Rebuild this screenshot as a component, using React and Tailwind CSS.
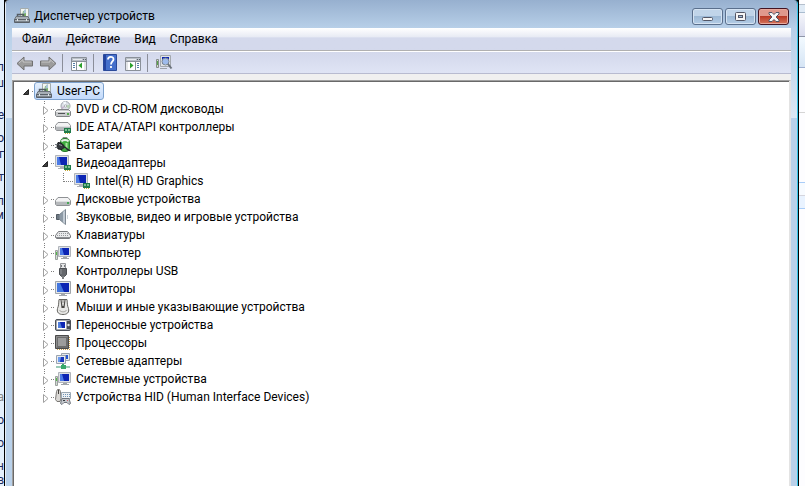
import { useState } from 'react';

function DeviceManagerIcon() {
  return (
    <svg width="16" height="16" viewBox="0 0 16 16" aria-hidden="true">
      <path d="M6.500.500h8v9h-8z" fill="#f4f6f2" stroke="#a5adad" />
      <path d="M9 3h3v5H8z" fill="#79b465" />
      <path d="M10 2l2-1v4l-3 1z" fill="#a9c4d6" />
      <path d="M3.500 9V6.500h6V9" fill="none" stroke="#555d64" strokeWidth="1.500" />
      <path d="M2 8.500h12l1.500 3h-15z" fill="#a7afb6" stroke="#6b737a" />
      <path d="M.5 11.500h15v3H.5z" fill="#7f888f" stroke="#5a6168" />
      <path d="M1 12.500h14" stroke="#aab2b8" />
      <path d="M3 11h1v2H3zM12 11h1v2h-1z" fill="#e3e8eb" />
    </svg>
  );
}

function Chip({ x = 9, y = 10 }) {
  return (
    <g>
      <path d={`M${x} ${y}h7v5h-7z`} fill="#1f7a4a" />
      <path d={`M${x + 1} ${y + 1}h2v2h-2zM${x + 4} ${y + 1}h2v2h-2z`} fill="#7dbd90" />
      <path d={`M${x + 1} ${y + 5}h1v1h-1zM${x + 3} ${y + 5}h1v1h-1zM${x + 5} ${y + 5}h1v1h-1z`} fill="#c8a93a" />
    </g>
  );
}

function DvdIcon() {
  return (
    <svg width="16" height="16" viewBox="0 0 16 16" aria-hidden="true">
      <circle cx="10.500" cy="5" r="4.500" fill="#dde1e8" stroke="#9ca1a9" />
      <path d="M10.500 5L8 1.500a4 4 0 0 1 3-1z" fill="#f6fbff" />
      <path d="M10.500 5l4-1.500a4 4 0 0 1-1 4z" fill="#b4d2b0" />
      <path d="M10.500 5L6.500 6l1 2z" fill="#c8b2cf" />
      <circle cx="10.500" cy="5" r="1.200" fill="#fff" stroke="#878c94" strokeWidth=".6" />
      <path d="M2.500 8.500h11l2 2v4l-1 1h-13l-1-1v-4z" fill="#c9cbcd" stroke="#808386" />
      <path d="M1 10.500h14" stroke="#f6f6f7" />
      <path d="M3 12.500h7" stroke="#505356" />
      <path d="M12 12h2v2h-2z" fill="#55a94d" />
    </svg>
  );
}

function IdeIcon() {
  return (
    <svg width="16" height="16" viewBox="0 0 16 16" aria-hidden="true">
      <path d="M3 3.500h10l2.500 3v4l-1 1h-13l-1-1v-4z" fill="#f3f3f4" stroke="#8e9194" />
      <path d="M1 7h14v4H1z" fill="#b6b9bc" />
      <path d="M1 7.500h14" stroke="#dfe1e2" />
      <Chip x={9} y={9} />
    </svg>
  );
}

function BatteryIcon() {
  return (
    <svg width="16" height="16" viewBox="0 0 16 16" aria-hidden="true">
      <path d="M8 .500h4v2H8z" fill="#d8dcd8" stroke="#848a84" />
      <rect x="5.500" y="1.500" width="9" height="13" rx="3.500" fill="#41ad41" stroke="#2a7a2f" />
      <path d="M6.500 4.500c1-2 6-2 7 0" fill="none" stroke="#e6efe6" strokeWidth="2" />
      <path d="M11.500 6v6" stroke="#a5e49b" strokeWidth="2" />
      <path d="M3 5.500l3 .5 3 2.500v2l-2 2-4-.5-1-3z" fill="#33373c" stroke="#191b1e" />
      <path d="M4 7.500l3 1" stroke="#949aa1" />
      <path d="M0 7.500h2.500M0 10.500h2.500" stroke="#777e86" />
      <path d="M9 10c3 0 2 3.500 6.500 3.500" fill="none" stroke="#23272c" strokeWidth="1.500" />
    </svg>
  );
}

function Screen({ x = 0, y = 0, w = 16, h = 11 }) {
  return (
    <g>
      <path d={`M${x + 0.5} ${y + 0.5}h${w - 1}v${h - 1}h-${w - 1}z`} fill="#dfe2e5" stroke="#b0b4ba" />
      <path d={`M${x + 2} ${y + 2}h${w - 4}v${h - 4}h-${w - 4}z`} fill="#0c25b4" />
      <path d={`M${x + 2} ${y + 2}h2l2 ${h - 4}h-4z`} fill="#4c7be6" />
    </g>
  );
}

function DisplayIcon() {
  return (
    <svg width="16" height="16" viewBox="0 0 16 16" aria-hidden="true">
      <Screen x={0} y={0} w={14} h={12} />
      <path d="M5 12h4v1H5zM3 13h6v1H3z" fill="#aeb3b8" />
      <Chip x={9} y={10} />
    </svg>
  );
}

function DiskIcon() {
  return (
    <svg width="16" height="16" viewBox="0 0 16 16" aria-hidden="true">
      <path d="M3 6.500h10l2.500 3v4l-1 1h-13l-1-1v-4z" fill="#f3f3f4" stroke="#8e9194" />
      <path d="M1 10h14v4H1z" fill="#b6b9bc" />
      <path d="M1 10.500h14" stroke="#dfe1e2" />
      <path d="M12 11h2v2h-2z" fill="#4aa758" />
    </svg>
  );
}

function SpeakerIcon() {
  return (
    <svg width="16" height="16" viewBox="0 0 16 16" aria-hidden="true">
      <path d="M1.500 5.500h3v5h-3z" fill="#6d7882" stroke="#525b64" />
      <path d="M4.500 5.500L10.500.500v15l-6-5z" fill="#8d9aa6" stroke="#7d8791" />
      <path d="M8 3v10l2 2V1z" fill="#c2cbd4" />
      <path d="M12.500 6v4" stroke="#ccd3d9" />
    </svg>
  );
}

function KeyboardIcon() {
  return (
    <svg width="16" height="16" viewBox="0 0 16 16" aria-hidden="true">
      <path d="M3.500 4.500h9l3 4v2l-1 1h-13l-1-1v-2z" fill="#e9eaeb" stroke="#77797c" />
      <path d="M4 6.500h9M2 8.500h12" stroke="#96999c" strokeDasharray="1 1" />
      <path d="M1 10h14v1H1z" fill="#8b8e91" />
    </svg>
  );
}

function ComputerIcon() {
  return (
    <svg width="16" height="16" viewBox="0 0 16 16" aria-hidden="true">
      <Screen x={3} y={1} w={13} h={11} />
      <path d="M8 12h4v1H8zM6 13h8v1H6z" fill="#a0a5aa" />
      <path d="M.5 5.500h2v9h-2z" fill="#d1d8d3" stroke="#9ba19e" />
      <path d="M1 7h1v3H1z" fill="#54bd48" />
    </svg>
  );
}

function UsbIcon() {
  return (
    <svg width="16" height="16" viewBox="0 0 16 16" aria-hidden="true">
      <path d="M5.500.500h5v5h-5z" fill="#e5e6e7" stroke="#97999c" />
      <path d="M6 2h1v2H6zM9 2h1v2H9z" fill="#76797d" />
      <path d="M4.500 5.500h7v6l-2 2h-3l-2-2z" fill="#65686c" stroke="#4b4e52" />
      <path d="M6 6v5" stroke="#93969a" />
      <path d="M7 13h2v3H7z" fill="#7a7d80" />
    </svg>
  );
}

function MonitorIcon() {
  return (
    <svg width="16" height="16" viewBox="0 0 16 16" aria-hidden="true">
      <path d="M.5.500h15v12H.5z" fill="#e4e7ea" stroke="#a0a5ab" />
      <path d="M2 2h12v9H2z" fill="#0c25b4" />
      <path d="M2 2h3l4 9H2z" fill="#4376de" />
      <path d="M6 13h4v1H6zM4 14h8v1H4z" fill="#a3a8ae" />
    </svg>
  );
}

function MouseIcon() {
  return (
    <svg width="16" height="16" viewBox="0 0 16 16" aria-hidden="true">
      <path d="M4 .500c-.5 4 0 5.500-1.500 9-1 4 1.500 6 5.500 6s6.500-2 5.500-6C12 6 12.500 4.500 12 .500z" fill="#e8e8e6" stroke="#64635f" />
      <path d="M5.500 1h1l1 6h1l1-6h1l-1 8h-3z" fill="#4a4845" />
      <path d="M7.500 1h1v3h-1z" fill="#8a8884" />
      <path d="M4.500 11c1 2.500 6 2.500 7 0" fill="none" stroke="#a9a8a4" />
    </svg>
  );
}

function PortableIcon() {
  return (
    <svg width="16" height="16" viewBox="0 0 16 16" aria-hidden="true">
      <rect x=".5" y="2.500" width="15" height="11" rx="1.500" fill="#a5a9b0" stroke="#4b5058" />
      <path d="M2 4h9v8H2z" fill="#fff" />
      <path d="M3 5h7v6H3z" fill="#0c25b4" />
      <path d="M3 5h2l2 6H3z" fill="#4f7ddd" />
      <path d="M12 4h3v8h-3z" fill="#4a4f57" />
      <circle cx="13.500" cy="8" r="1.200" fill="#e1e5e9" />
    </svg>
  );
}

function CpuIcon() {
  return (
    <svg width="16" height="16" viewBox="0 0 16 16" aria-hidden="true">
      <path d="M2 14.500h13M14.500 2v13" stroke="#c69d50" strokeDasharray="1 1" strokeWidth="1" />
      <path d="M.5.500h13v13H.5z" fill="#6c6c6c" stroke="#4a4a4a" />
      <path d="M3 3h8v8H3z" fill="#9c9c9c" />
      <path d="M1.500 12.500v-11h11" fill="none" stroke="#8e8e8e" />
    </svg>
  );
}

function NetworkIcon() {
  return (
    <svg width="16" height="16" viewBox="0 0 16 16" aria-hidden="true">
      <path d="M6.500.500h8v7h-8z" fill="#e4e8ec" stroke="#9aa3ae" />
      <path d="M8 2h5v4H8z" fill="#2455cf" />
      <path d="M1.500 2.500h9v8h-9z" fill="#e9ecef" stroke="#9aa3ae" />
      <path d="M3 4h6v5H3z" fill="#1736bd" />
      <path d="M3 4h3l-1 5H3z" fill="#6c9bee" />
      <path d="M7 11h2v2H7z" fill="#34a86c" />
      <path d="M1 14h14" stroke="#9ccbb8" strokeWidth="2" />
      <path d="M6 12h5v4H6z" fill="#38a96a" />
    </svg>
  );
}

function HidIcon() {
  return (
    <svg width="16" height="16" viewBox="0 0 16 16" aria-hidden="true">
      <path d="M1.500 2.500l1-2h2l1 2 .5 7-1 3h-3l-1.500-2z" fill="#d9d7d4" stroke="#7b7976" />
      <path d="M3 1h1v4H3z" fill="#45433f" />
      <path d="M6.500 3.500h9v6h-9z" fill="#eef1f4" stroke="#9aa8b4" />
      <path d="M8 5.500h7M8 7.500h7" stroke="#6f94b5" strokeDasharray="1 1" />
      <path d="M7 9.500h7l1.500 5-1.500 1-2-2H9l-2 2-1.500-1z" fill="#c3c7cc" stroke="#70767e" />
      <path d="M8 11h2v1H8z" fill="#30363d" />
      <path d="M12 11h1v1h-1z" fill="#c66" />
    </svg>
  );
}

function ArrowLeft() {
  return (
    <svg width="18" height="16" viewBox="0 0 18 16" aria-hidden="true">
      <path d="M1 8.500l7-6.500v4h8.500v5H8v4z" fill="#9c9c9c" stroke="#707070" strokeLinejoin="round" />
      <path d="M3 8l4-3.500V7h8.500" fill="none" stroke="#c5c5c5" />
    </svg>
  );
}

function ArrowRight() {
  return (
    <svg width="18" height="16" viewBox="0 0 18 16" aria-hidden="true">
      <path d="M17 8.500L10 2v4H1.500v5H10v4z" fill="#9c9c9c" stroke="#707070" strokeLinejoin="round" />
      <path d="M2.500 7H11V4.500L15 8" fill="none" stroke="#c5c5c5" />
    </svg>
  );
}

function ConsoleTreeIcon() {
  return (
    <svg width="16" height="14" viewBox="0 0 16 14" aria-hidden="true">
      <path d="M.5.500h15v13H.5z" fill="#fff" stroke="#8a9099" />
      <path d="M1 1h14v3H1z" fill="#b9bfc8" />
      <path d="M2 2.500h9" stroke="#e7eaee" />
      <path d="M12 2.500h3" stroke="#59616c" strokeDasharray="1 1" />
      <path d="M5.500 4v9M1 4.500h14" stroke="#8a9099" />
      <path d="M2 6.500h2M2 8.500h2M2 10.500h2" stroke="#547ea9" />
      <path d="M11 5.500v6L7.500 8.500z" fill="#2ca02c" />
      <path d="M13 5v8h2V5z" fill="#e3e5e8" />
    </svg>
  );
}

function ActionPaneIcon() {
  return (
    <svg width="16" height="14" viewBox="0 0 16 14" aria-hidden="true">
      <path d="M.5.500h15v13H.5z" fill="#fff" stroke="#8a9099" />
      <path d="M1 1h14v3H1z" fill="#b9bfc8" />
      <path d="M2 2.500h9" stroke="#e7eaee" />
      <path d="M12 2.500h3" stroke="#59616c" strokeDasharray="1 1" />
      <path d="M10.500 4v9M1 4.500h14" stroke="#8a9099" />
      <path d="M12 6.500h2M12 8.500h2M12 10.500h2" stroke="#547ea9" />
      <path d="M5 5.500v6l3.500-3z" fill="#2ca02c" />
      <path d="M1 5v8h2V5z" fill="#e3e5e8" />
    </svg>
  );
}

function HelpIcon() {
  return (
    <svg width="14" height="17" viewBox="0 0 14 17" aria-hidden="true">
      <path d="M.5.500h13v16H.5z" fill="#4570cb" stroke="#2b4a9a" />
      <path d="M1 1h2v15H1z" fill="#2444a0" />
      <path d="M5 5.500c0-3.500 5.500-3.500 5.500-.3C10.500 7.500 8 7.500 8 10.500M8 12v2" fill="none" stroke="#fff" strokeWidth="1.800" />
    </svg>
  );
}

function ScanIcon() {
  return (
    <svg width="17" height="16" viewBox="0 0 17 16" aria-hidden="true">
      <path d="M4.500.500h10v11h-10z" fill="#dfe2e5" stroke="#a3a8ae" />
      <path d="M6 2h7v7H6z" fill="#0c25b4" />
      <path d="M.5 4.500h2v8h-2z" fill="#d1d8d3" stroke="#858b88" />
      <path d="M1 6h1v4H1z" fill="#54a348" />
      <circle cx="9.500" cy="6.500" r="3.500" fill="#b9d6f4" fillOpacity=".85" stroke="#7d8791" />
      <path d="M12 9l3.500 4.500" stroke="#6b737b" strokeWidth="2" />
      <path d="M4 13h7v1H4z" fill="#9da3a9" />
    </svg>
  );
}

const categories = [
  { label: 'DVD и CD-ROM дисководы', icon: DvdIcon },
  { label: 'IDE ATA/ATAPI контроллеры', icon: IdeIcon },
  { label: 'Батареи', icon: BatteryIcon },
  { label: 'Видеоадаптеры', icon: DisplayIcon, devices: ['Intel(R) HD Graphics'] },
  { label: 'Дисковые устройства', icon: DiskIcon },
  { label: 'Звуковые, видео и игровые устройства', icon: SpeakerIcon },
  { label: 'Клавиатуры', icon: KeyboardIcon },
  { label: 'Компьютер', icon: ComputerIcon },
  { label: 'Контроллеры USB', icon: UsbIcon },
  { label: 'Мониторы', icon: MonitorIcon },
  { label: 'Мыши и иные указывающие устройства', icon: MouseIcon },
  { label: 'Переносные устройства', icon: PortableIcon },
  { label: 'Процессоры', icon: CpuIcon },
  { label: 'Сетевые адаптеры', icon: NetworkIcon },
  { label: 'Системные устройства', icon: ComputerIcon },
  { label: 'Устройства HID (Human Interface Devices)', icon: HidIcon },
];

const menus = ['Файл', 'Действие', 'Вид', 'Справка'];

// Letters of the page that shows behind the left edge of the window
const behind = [
  { text: 'л', cls: 'pt-[60px]' },
  { text: 'ш', cls: 'pt-[2px]' },
  { text: 'е', cls: 'pt-[18px]' },
  { text: 'о', cls: 'pt-[9px]' },
  { text: 'г', cls: 'pt-[2px]' },
  { text: 'т', cls: 'pt-[9px]' },
  { text: 'л', cls: 'pt-[10px]' },
  { text: 'м', cls: '' },
  { text: 'а', cls: 'pt-[168px] text-[#888888]' },
  { text: 'о', cls: 'pt-[9px]' },
  { text: 'о', cls: 'pt-[9px]' },
  { text: 'н', cls: 'pt-[9px]' },
  { text: 'в', cls: '' },
];

function Twisty({ open }) {
  return open
    ? <path d="M10.500 7.500v5h-5z" fill="#404040" stroke="#262626" strokeLinejoin="round" />
    : <path d="M6.500 6.500v8l4.500-4z" fill="#fff" stroke="#a0a0a0" />;
}

function Expander({ open, onToggle, label, root, last }) {
  return (
    <button type="button" onClick={onToggle} aria-expanded={open} aria-label={label} className="w-4 h-[18px] shrink-0">
      <svg width="16" height="18" viewBox="0 0 16 18" className="overflow-visible" aria-hidden="true">
        {!root && <path d={last ? 'M7.500 1v3' : 'M7.500 1v3M7.500 17v1'} stroke="#808080" strokeDasharray="1 1" />}
        <path d="M14 9.500h3" stroke="#808080" strokeDasharray="1 1" />
        <Twisty open={open} />
      </svg>
    </button>
  );
}

function NodeLabel({ icon: Icon, text, selected, onSelect }) {
  return (
    <button
      type="button"
      onClick={onSelect}
      className={`flex items-center gap-[5px] h-[18px] pl-px pr-[3px] border rounded-[3px] whitespace-nowrap ${selected ? 'border-[#7da2ce] bg-linear-to-b from-[#e4effc] to-[#c3dafb]' : 'border-transparent'}`}
    >
      <Icon />
      <span className="leading-4">{text}</span>
    </button>
  );
}

function Category({ item, last, selected, onSelect }) {
  const [open, setOpen] = useState(Boolean(item.devices));

  return (
    <li>
      <div className="flex pl-[23px]">
        <Expander open={open && Boolean(item.devices)} onToggle={() => setOpen(!open)} label={`Развернуть: ${item.label}`} last={last} />
        <NodeLabel icon={item.icon} text={item.label} selected={selected === item.label} onSelect={() => onSelect(item.label)} />
      </div>
      {open && item.devices && (
        <ul>
          {item.devices.map(name => (
            <li key={name} className="flex pl-[42px]">
              <svg width="16" height="18" viewBox="0 0 16 18" className="overflow-visible shrink-0" aria-hidden="true">
                <path d="M-11.500 1v17M7.500 1v9M8 9.500h10" fill="none" stroke="#808080" strokeDasharray="1 1" />
              </svg>
              <NodeLabel icon={item.icon} text={name} selected={selected === name} onSelect={() => onSelect(name)} />
            </li>
          ))}
        </ul>
      )}
    </li>
  );
}

function DeviceTree() {
  const [open, setOpen] = useState(true);
  const [selected, setSelected] = useState('User-PC');

  return (
    <div className="flex-1 min-h-0 overflow-hidden bg-white border-t border-l border-[#a0a0a0] border-r-2 border-r-[#e3e3e3]">
      <div className="h-full border-t border-l border-[#696969]">
        <div className="flex pl-1">
          <Expander root open={open} onToggle={() => setOpen(!open)} label="Развернуть: User-PC" />
          <NodeLabel icon={DeviceManagerIcon} text="User-PC" selected={selected === 'User-PC'} onSelect={() => setSelected('User-PC')} />
        </div>
        {open && (
          <ul>
            {categories.map((item, i) => (
              <Category key={item.label} item={item} last={i === categories.length - 1} selected={selected} onSelect={setSelected} />
            ))}
          </ul>
        )}
      </div>
    </div>
  );
}

function TitleBar() {
  const box = 'w-[31px] h-[17px] rounded-[3px] border border-[#5a6f8c] flex items-center justify-center';
  const glass = 'bg-linear-to-b from-[#c0d4e9] from-50% via-[#9cb8d5] via-50% to-[#b4cde6] inset-shadow-[0_0_0_1px_#d5e3f2]';

  return (
    <header className="flex items-start h-7 shrink-0 pl-2 pr-[8px] bg-linear-to-b from-[#97b0cf] to-[#b7cfe8]">
      <div className="flex items-center gap-1 pt-2">
        <DeviceManagerIcon />
        <h1 className="leading-4">Диспетчер устройств</h1>
      </div>
      <div className="flex gap-[2px] ml-auto pt-2">
        <button type="button" aria-label="Свернуть" className={`${box} ${glass}`}>
          <svg width="12" height="11" viewBox="0 0 12 11" aria-hidden="true">
            <rect x=".5" y="6.500" width="10" height="3" rx="1" fill="#f5f5f5" stroke="#535666" />
          </svg>
        </button>
        <button type="button" aria-label="Развернуть" className={`${box} ${glass}`}>
          <svg width="12" height="10" viewBox="0 0 12 10" aria-hidden="true">
            <rect x=".5" y=".5" width="10" height="8" rx="1" fill="#f5f5f5" stroke="#535666" />
            <rect x="3.500" y="3.500" width="4" height="2" fill="#9fbbd8" stroke="#535666" />
          </svg>
        </button>
        <button
          type="button"
          aria-label="Закрыть"
          className="w-[31px] h-[17px] rounded-[3px] border border-[#431422] flex items-center justify-center bg-linear-to-b from-[#e0988c] from-50% via-[#b93a26] via-50% to-[#d4735b] inset-shadow-[0_0_0_1px_#e8a99d]"
        >
          <svg width="12" height="10" viewBox="0 0 12 10" aria-hidden="true">
            <path d="M1 .5h3l2 2 2-2h3v1.500L8 5l3 3v1.500H8l-2-2-2 2H1V8l3-3-3-3z" fill="#f7f7f7" stroke="#535666" />
          </svg>
        </button>
      </div>
    </header>
  );
}

function Separator() {
  return <span className="w-px h-[18px] bg-[#8b8e99]" />;
}

function Toolbar() {
  return (
    <div role="toolbar" className="flex items-center h-[22px] pl-1 border-b border-[#b8bbd0] bg-linear-to-b from-[#d3d8eb] to-[#dfe4f5]">
      <button type="button" aria-label="Назад"><ArrowLeft /></button>
      <button type="button" aria-label="Вперёд" className="ml-[5px] mr-[5px]"><ArrowRight /></button>
      <Separator />
      <button type="button" aria-label="Дерево консоли" className="ml-2 mr-[6px] pt-[3px]"><ConsoleTreeIcon /></button>
      <Separator />
      <button type="button" aria-label="Справка" className="ml-[9px] mr-2"><HelpIcon /></button>
      <button type="button" aria-label="Панель действий" className="pt-[3px] mr-[6px]"><ActionPaneIcon /></button>
      <Separator />
      <button type="button" aria-label="Обновить конфигурацию оборудования" className="ml-2"><ScanIcon /></button>
    </div>
  );
}

function FrameEdge() {
  return (
    <div className="w-[6px] shrink-0 bg-[#b9d1ea]">
      <div className="h-[90px] bg-linear-to-b from-[#b7cfe8] to-[#dce8f4]" />
    </div>
  );
}

export default function App() {
  return (
    <div className="flex h-screen overflow-hidden bg-black font-['Roboto','Open_Sans',sans-serif] text-[12px] text-black">
      <div className="w-1 shrink-0 overflow-hidden bg-[#e4f0fc] text-[#1f2a5c]" aria-hidden="true">
        {behind.map((row, i) => (
          <div key={i} className={`flex justify-end leading-[14px] ${row.cls}`}>{row.text}</div>
        ))}
      </div>

      <div className="flex flex-col flex-1 min-w-0 ml-px mr-px border-l border-l-[#e6eef7] border-r border-r-[#35c5e8] rounded-t-[4px] overflow-hidden">
        <TitleBar />
        <div className="flex flex-1 min-h-0">
          <FrameEdge />
          <main className="flex flex-col flex-1 min-w-0 bg-[#f0f0f0]">
            <nav className="flex items-center gap-[14px] h-[23px] pl-[10px] border-b border-[#b0b0b0] bg-linear-to-b from-white from-0% via-[#e8ebf4] via-40% to-[#d4d9ec] to-45%">
              {menus.map(name => (
                <button key={name} type="button" className="leading-4">{name}</button>
              ))}
            </nav>
            <div className="h-px shrink-0 bg-white" />
            <Toolbar />
            <div className="h-[6px] shrink-0" />
            <DeviceTree />
          </main>
          <FrameEdge />
        </div>
      </div>

      <div className="w-[6px] shrink-0 bg-[#fdfdff]" aria-hidden="true">
        <div className="h-[5px] border-b border-[#b5c0cd]" />
        <div className="h-2 border-b border-[#a9bccf] bg-[#e0ebf6]" />
        <div className="h-6 border-b border-[#8f95a8] bg-linear-to-b from-[#f5f6fb] to-[#d9dcee]" />
        <div className="h-[31px] border-b border-[#a0b0d0] bg-linear-to-b from-[#f3faff] to-[#d6e5f5]" />
        <div className="h-[45px] border-b border-[#d5d5d5]" />
        <div className="h-[70px] border-b border-[#a9cdf8]" />
        <div className="h-[13px] border-b border-[#d5d5dd] bg-[#f7fbff]" />
        <div className="h-[13px] border-b border-[#a9cdf8] bg-[#e9f3ff]" />
      </div>
    </div>
  );
}
